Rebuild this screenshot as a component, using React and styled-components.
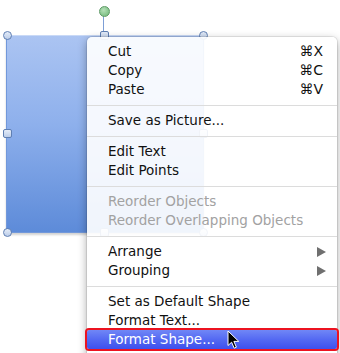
import styled, { createGlobalStyle } from 'styled-components';

const GlobalStyle = createGlobalStyle`
  html, body {
    margin: 0;
    padding: 0;
    background: #ffffff;
  }
  body {
    font-family: "DejaVu Sans", "Liberation Sans", sans-serif;
  }
`;

const Canvas = styled.div`
  position: relative;
  width: 340px;
  height: 353px;
  overflow: hidden;
  background: #fff;
`;

const Shape = styled.div`
  position: absolute;
  left: 6px;
  top: 35px;
  width: 196px;
  height: 196px;
  background: linear-gradient(180deg, #abc4f2 0%, #8eb0ec 45%, #5d8bd9 100%);
  border: 1px solid #7298da;
  border-top-color: #c9d9f6;
  box-shadow: 0 2px 2px rgba(0, 0, 0, 0.18);
`;

const RotateLine = styled.div`
  position: absolute;
  left: 103px;
  top: 15px;
  width: 1px;
  height: 17px;
  background: #7d9fd6;
`;

const RotateKnob = styled.div`
  position: absolute;
  left: 99px;
  top: 6px;
  width: 9px;
  height: 9px;
  border-radius: 50%;
  border: 1px solid #5e9a66;
  background: radial-gradient(circle at 40% 35%, #b5e0b8, #6cb676);
`;

const Handle = styled.div`
  position: absolute;
  left: ${p => p.$x - 4}px;
  top: ${p => p.$y - 4}px;
  width: 7px;
  height: 7px;
  border-radius: ${p => (p.$square ? '2px' : '50%')};
  border: 1px solid #5f7fb3;
  background: linear-gradient(180deg, #e4ecf8, #bccde9);
`;

const Menu = styled.div`
  position: absolute;
  left: 87px;
  top: 37px;
  width: 250px;
  height: 330px;
  padding-top: 5px;
  box-sizing: border-box;
  background: rgba(255, 255, 255, 0.91);
  border-radius: 5px 5px 0 0;
  box-shadow: 0 3px 10px rgba(0, 0, 0, 0.35), 0 0 0 1px rgba(0, 0, 0, 0.08);
  display: flex;
  flex-direction: column;
  font-size: 13.5px;
`;

const Item = styled.div`
  position: relative;
  height: 19px;
  display: flex;
  align-items: center;
  justify-content: space-between;
  padding: 0 14px 0 21px;
  color: ${p => (p.$disabled ? '#a2a2a2' : '#111')};
  white-space: nowrap;
  line-height: 19px;
`;

const Selected = styled(Item)`
  color: #fff;
  background: linear-gradient(180deg, #7087f6 0%, #5469f2 50%, #3d50ee 100%);
  outline: 2px solid #ec1320;
  border-radius: 2px;
`;

const Shortcut = styled.span`
  color: #111;
  font-size: 14px;
`;

const Arrow = styled.span`
  flex: none;
  width: 0;
  height: 0;
  margin-right: -3px;
  border-top: 5px solid transparent;
  border-bottom: 5px solid transparent;
  border-left: 9px solid #6f6f6f;
`;

const Separator = styled.div`
  height: 12px;
  display: flex;
  align-items: center;
  &::after {
    content: '';
    flex: 1;
    height: 1px;
    background: #dcdcdc;
  }
`;

const Cursor = styled.svg`
  position: absolute;
  left: 227px;
  top: 330px;
`;

const App = () => {
  return (
    <>
      <GlobalStyle />
      <Canvas>
        <Shape />
        <RotateLine />
        <RotateKnob />
        <Handle $x={7} $y={35} />
        <Handle $x={104} $y={35} $square />
        <Handle $x={203} $y={35} />
        <Handle $x={7} $y={133} $square />
        <Handle $x={203} $y={133} $square />
        <Handle $x={7} $y={232} />
        <Handle $x={104} $y={232} $square />
        <Handle $x={203} $y={232} />
        <Menu>
          <Item>Cut<Shortcut>⌘X</Shortcut></Item>
          <Item>Copy<Shortcut>⌘C</Shortcut></Item>
          <Item>Paste<Shortcut>⌘V</Shortcut></Item>
          <Separator />
          <Item>Save as Picture...</Item>
          <Separator />
          <Item>Edit Text</Item>
          <Item>Edit Points</Item>
          <Separator />
          <Item $disabled>Reorder Objects</Item>
          <Item $disabled>Reorder Overlapping Objects</Item>
          <Separator />
          <Item>Arrange<Arrow /></Item>
          <Item>Grouping<Arrow /></Item>
          <Separator />
          <Item>Set as Default Shape</Item>
          <Item>Format Text...</Item>
          <Selected>Format Shape...</Selected>
        </Menu>
        <Cursor width="14" height="20" viewBox="0 0 14 20">
          <path
            d="M1 1 L1 15.5 L4.6 12.2 L7.2 18.2 L9.4 17.2 L6.9 11.4 L11.8 11.4 Z"
            fill="#000"
            stroke="#fff"
            strokeWidth="1"
            strokeLinejoin="round"
          />
        </Cursor>
      </Canvas>
    </>
  );
};

export default App;
